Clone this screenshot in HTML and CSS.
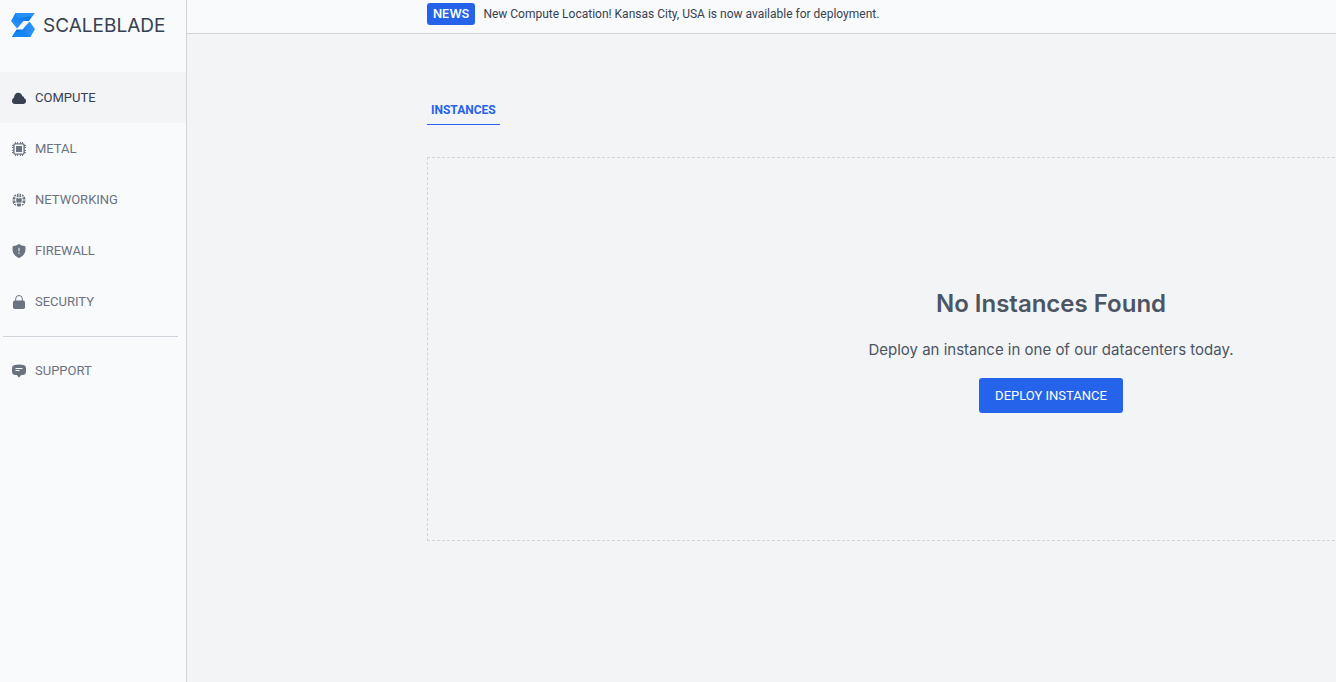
FILE: index.html
```html
<!DOCTYPE html>
<html lang="en">
<head>
<meta charset="utf-8">
<meta name="viewport" content="width=device-width, initial-scale=1">
<title>Scaleblade</title>
<link rel="stylesheet" href="styles.css">
</head>
<body>
<div class="app">
  <aside class="sidebar">
    <a class="brand" href="#">
      <svg class="brand-mark" viewBox="0 0 24 24" aria-hidden="true">
        <defs>
          <linearGradient id="top" x1="0" y1="1" x2="1" y2="0"><stop offset="0" stop-color="#2f9bff"/><stop offset="1" stop-color="#0068e0"/></linearGradient>
          <linearGradient id="bottom" x1="0" y1="0" x2="1" y2="0"><stop offset="0" stop-color="#006be6"/><stop offset="1" stop-color="#3399ff"/></linearGradient>
        </defs>
        <path fill="url(#top)" d="M4.500 0H23.500L18 8H12.500L6 15.500L0 8Z"/>
        <path fill="#2491fb" d="M4.500 0H23.500L21 3.500L6 5Z"/>
        <path fill="url(#bottom)" d="M18.500 8.500L24 16L19.500 24H1L5.500 16.500H11.500Z"/>
        <path fill="#1585f5" d="M1 24L4 19H13L19.500 24Z"/>
      </svg>
      <span>SCALEBLADE</span>
    </a>
    <nav class="nav">
      <a class="nav-link active" href="#" aria-current="page">
        <svg class="icon" viewBox="0 0 14 14" aria-hidden="true"><path d="M3.200 13A3.200 3.200 0 0 1 0 9.800C0 8.300 1 7.200 2 6.800C2 3.800 3.800 1.700 6.300 1.700C8.400 1.700 9.800 3 10.400 5.200C11.400 5.300 12.200 6 12.200 7.200A3 3 0 0 1 11.500 13Z"/></svg>
        <span>COMPUTE</span>
      </a>
      <a class="nav-link" href="#">
        <svg class="icon" viewBox="0 0 14 14" aria-hidden="true"><path d="M4 4h6v6H4Z"/><path fill-rule="evenodd" d="M3 1.200h8q1.800 0 1.800 1.800v8q0 1.800-1.800 1.800H3q-1.800 0-1.800-1.800V3q0-1.800 1.800-1.800ZM3.200 2.600q-.6 0-.6.6v7.600q0 .6.6.6h7.600q.6 0 .6-.6V3.200q0-.6-.6-.6Z"/><path class="pins" d="M3.500 0v1.500M5.500 0v1.500M8.500 0v1.500M10.500 0v1.500M3.500 12.500V14M5.500 12.500V14M8.500 12.500V14M10.500 12.500V14M0 3.500h1.500M0 5.500h1.500M0 8.500h1.500M0 10.500h1.500M12.500 3.500H14M12.500 5.500H14M12.500 8.500H14M12.500 10.500H14"/></svg>
        <span>METAL</span>
      </a>
      <a class="nav-link" href="#">
        <svg class="icon" viewBox="0 0 14 14" aria-hidden="true"><circle cx="7" cy="7" r="6.600"/><path class="cut" d="M7 0v5M4.800 0Q2.500 7 4.800 14M9.200 0Q11.500 7 9.200 14M0 7h4M10 7h4M1.500 3.500Q7 6.500 12.500 3.500M2 10.500Q7 9.500 12 10.500"/></svg>
        <span>NETWORKING</span>
      </a>
      <a class="nav-link" href="#">
        <svg class="icon" viewBox="0 0 14 14" aria-hidden="true"><path d="M7 0Q9.500 2 13.300 2.300C14.200 7.800 12 12.200 7 14C2 12.200-.2 7.800.7 2.300Q4.500 2 7 0Z"/><path class="cut" d="M7 3.800v3.600M7 8.600v1.300"/></svg>
        <span>FIREWALL</span>
      </a>
      <a class="nav-link" href="#">
        <svg class="icon" viewBox="0 0 14 14" aria-hidden="true"><rect x="1" y="5.600" width="12" height="8.400" rx="1.800"/><path class="shackle" d="M3.700 6V3.800a3.300 3.300 0 0 1 6.600 0V6"/></svg>
        <span>SECURITY</span>
      </a>
      <hr class="rule">
      <a class="nav-link" href="#">
        <svg class="icon" viewBox="0 0 14 14" aria-hidden="true"><path d="M2.500 1Q7 .2 11.500 1 14 1.500 14 4V8Q14 10.500 11.500 11H9.200L7 13.800 4.800 11H2.500Q0 10.500 0 8V4Q0 1.500 2.500 1Z"/><path class="cut" d="M3.500 4.500h7M3.500 6.500h4"/></svg>
        <span>SUPPORT</span>
      </a>
    </nav>
  </aside>
  <div class="page">
    <header class="news">
      <span class="badge">NEWS</span>
      <span>New Compute Location! Kansas City, USA is now available for deployment.</span>
    </header>
    <main class="content">
      <nav class="tabs"><a class="tab" href="#">INSTANCES</a></nav>
      <section class="empty">
        <h1>No Instances Found</h1>
        <p>Deploy an instance in one of our datacenters today.</p>
        <button class="deploy" type="button">DEPLOY INSTANCE</button>
      </section>
    </main>
  </div>
</div>
</body>
</html>
```
FILE: styles.css
```css
* { box-sizing: border-box; }
body {
  margin: 0;
  font-family: Inter, "Liberation Sans", sans-serif;
  color: #4b5563;
  background: #f3f4f6;
}
a { color: inherit; text-decoration: none; }
.app { display: flex; min-height: 100vh; }
.sidebar {
  flex: 0 0 187px;
  background: #f9fafc;
  border-right: 1px solid #d1d5db;
}
.nav-link, .news, .tab, .deploy { font-family: Roboto, "Liberation Sans", sans-serif; }
.brand {
  display: flex;
  align-items: center;
  gap: 8px;
  height: 72px;
  padding: 0 11px 22px;
  font-size: 19px;
  color: #374151;
}
.brand-mark { width: 24px; height: 24px; }
.nav-link {
  display: flex;
  align-items: center;
  gap: 9px;
  height: 51px;
  padding: 0 12px;
  font-size: 13px;
  color: #6b7280;
}
.active { color: #374151; background: #f3f4f6; }
.icon { width: 14px; height: 14px; fill: currentColor; }
.cut { fill: none; stroke: #f9fafc; stroke-width: 1; }
.pins, .shackle { fill: none; stroke: currentColor; }
.rule {
  height: 1px;
  margin: 9px 8px 8px 3px;
  border: 0;
  background: #d1d5db;
}
.page { flex: 1; min-width: 0; overflow: hidden; }
.news {
  display: flex;
  align-items: center;
  gap: 8px;
  height: 34px;
  padding: 0 240px 6px;
  white-space: nowrap;
  font-size: 12px;
  color: #374151;
  background: #f9fafc;
  border-bottom: 1px solid #d1d5db;
}
.badge {
  padding: 3px 6px;
  border-radius: 3px;
  font-family: Inter, "Liberation Sans", sans-serif;
  line-height: 16px;
  font-weight: 600;
  color: #fff;
  background: #2563eb;
}
.content { padding: 64px 0 64px 240px; }
.tabs { display: flex; margin-bottom: 32px; }
.tab {
  padding: 4px 4px 5px;
  border-bottom: 1px solid #2563eb;
  font-size: 12px;
  line-height: 17px;
  font-weight: 700;
  color: #2563eb;
}
.empty {
  display: flex;
  flex-direction: column;
  align-items: center;
  justify-content: center;
  min-width: 1248px;
  padding: 128px 0 127px;
  border: 1px dashed #d1d5db;
}
.empty h1 { margin: 0 0 16px; font-size: 24px; line-height: 36px; font-weight: 600; }
.empty p { margin: 0 0 16px; font-size: 15px; line-height: 24px; }
.deploy {
  padding: 8px 16px;
  border: 0;
  border-radius: 3px;
  font-size: 13px;
  line-height: 19px;
  color: #fff;
  background: #2563eb;
}
```
